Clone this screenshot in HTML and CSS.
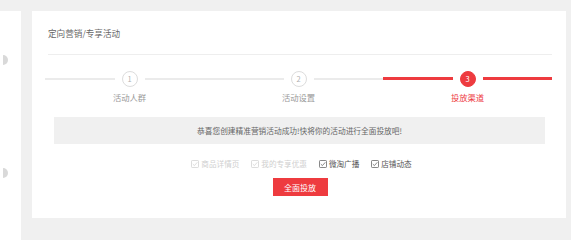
FILE: index.html
```html
<!DOCTYPE html>
<html lang="zh-CN">
<head>
  <meta charset="UTF-8">
  <title>定向营销/专享活动</title>
  <link rel="stylesheet" href="styles.css">
</head>
<body>
  <div class="layout">
    <div class="sidebar">
      <span class="handle"></span>
      <span class="handle handle-low"></span>
    </div>

    <div class="main">
      <div class="card">
        <div class="card-title">定向营销/专享活动</div>

        <div class="steps">
          <div class="step">
            <div class="step-track">
              <span class="step-line"></span>
              <span class="step-num">1</span>
              <span class="step-line"></span>
            </div>
            <div class="step-label">活动人群</div>
          </div>
          <div class="step">
            <div class="step-track">
              <span class="step-line"></span>
              <span class="step-num">2</span>
              <span class="step-line"></span>
            </div>
            <div class="step-label">活动设置</div>
          </div>
          <div class="step active">
            <div class="step-track">
              <span class="step-line"></span>
              <span class="step-num">3</span>
              <span class="step-line"></span>
            </div>
            <div class="step-label">投放渠道</div>
          </div>
        </div>

        <div class="notice">恭喜您创建精准营销活动成功!快将你的活动进行全面投放吧!</div>

        <div class="channels">
          <label class="channel disabled">
            <svg class="check" viewBox="0 0 8 8"><rect x="0.5" y="0.5" width="7" height="7" rx="0.8" fill="none" stroke="currentColor" stroke-width="0.7"/><path d="M1.8 4.1 L3.4 5.6 L6.3 2.3" fill="none" stroke="currentColor" stroke-width="0.7"/></svg>商品详情页
          </label>
          <label class="channel disabled">
            <svg class="check" viewBox="0 0 8 8"><rect x="0.5" y="0.5" width="7" height="7" rx="0.8" fill="none" stroke="currentColor" stroke-width="0.7"/><path d="M1.8 4.1 L3.4 5.6 L6.3 2.3" fill="none" stroke="currentColor" stroke-width="0.7"/></svg>我的专享优惠
          </label>
          <label class="channel">
            <svg class="check" viewBox="0 0 8 8"><rect x="0.5" y="0.5" width="7" height="7" rx="0.8" fill="none" stroke="currentColor" stroke-width="0.7"/><path d="M1.8 4.1 L3.4 5.6 L6.3 2.3" fill="none" stroke="currentColor" stroke-width="0.7"/></svg>微淘广播
          </label>
          <label class="channel">
            <svg class="check" viewBox="0 0 8 8"><rect x="0.5" y="0.5" width="7" height="7" rx="0.8" fill="none" stroke="currentColor" stroke-width="0.7"/><path d="M1.8 4.1 L3.4 5.6 L6.3 2.3" fill="none" stroke="currentColor" stroke-width="0.7"/></svg>店铺动态
          </label>
        </div>

        <div class="actions">
          <button class="btn-launch">全面投放</button>
        </div>
      </div>
    </div>
  </div>
</body>
</html>
```

FILE: styles.css
```css
body {
  margin: 0;
  background: #f0f0f0;
  font-family: "Noto Sans CJK SC", "Noto Sans", sans-serif;
  color: #555;
}

.layout {
  display: flex;
  padding-top: 11px;
  height: 229px;
}

.sidebar {
  width: 21px;
  background: #fff;
  display: flex;
  flex-direction: column;
  padding-top: 44px;
}

.handle {
  display: block;
  width: 5px;
  height: 10px;
  margin-left: 3px;
  border-radius: 0 5px 5px 0;
  background: #d9d9d9;
}

.handle-low {
  margin-top: 103px;
}

.main {
  flex: 1;
  padding: 0 5px 0 11px;
}

.card {
  background: #fff;
  padding: 0 14px 22px 16px;
}

.card-title {
  height: 43px;
  display: flex;
  align-items: center;
  font-size: 8.6px;
  color: #666;
  border-bottom: 1px solid #eee;
}

.steps {
  display: flex;
  margin: 15px 0 0 -3px;
}

.step {
  flex: 1;
  text-align: center;
}

.step-track {
  display: flex;
  align-items: center;
  gap: 7px;
  height: 17px;
}

.step-line {
  flex: 1;
  height: 2px;
  background: #ebebeb;
}

.step-num {
  width: 14px;
  height: 14px;
  border: 1.5px solid #ddd;
  border-radius: 50%;
  font-size: 7.5px;
  line-height: 14px;
  color: #b0b0b0;
  background: #fff;
}

.step-label {
  margin-top: 4px;
  line-height: 12px;
  font-size: 8.3px;
  color: #999;
}

.step.active .step-line {
  height: 3px;
  background: #ee3b3f;
}

.step.active .step-num {
  border-color: #ee3b3f;
  background: #ee3b3f;
  color: #fff;
}

.step.active .step-label {
  color: #ee3b3f;
}

.notice {
  margin: 14px 7px 0 6px;
  height: 27px;
  line-height: 27px;
  background: #f0f0f0;
  text-align: center;
  font-size: 7.7px;
  color: #666;
}

.channels {
  display: flex;
  justify-content: center;
  gap: 12px;
  margin-top: 14px;
  margin-left: 3px;
  line-height: 12px;
  font-size: 7.6px;
}

.channel {
  display: flex;
  align-items: center;
  gap: 2px;
  color: #555;
}

.channel.disabled {
  color: #cfcfcf;
}

.check {
  width: 8px;
  height: 8px;
}

.actions {
  display: flex;
  justify-content: center;
  margin-top: 8px;
}

.btn-launch {
  width: 55px;
  height: 18px;
  padding: 0;
  border: none;
  background: #ee3b3f;
  color: #fff;
  font-family: inherit;
  font-size: 8px;
}
```
